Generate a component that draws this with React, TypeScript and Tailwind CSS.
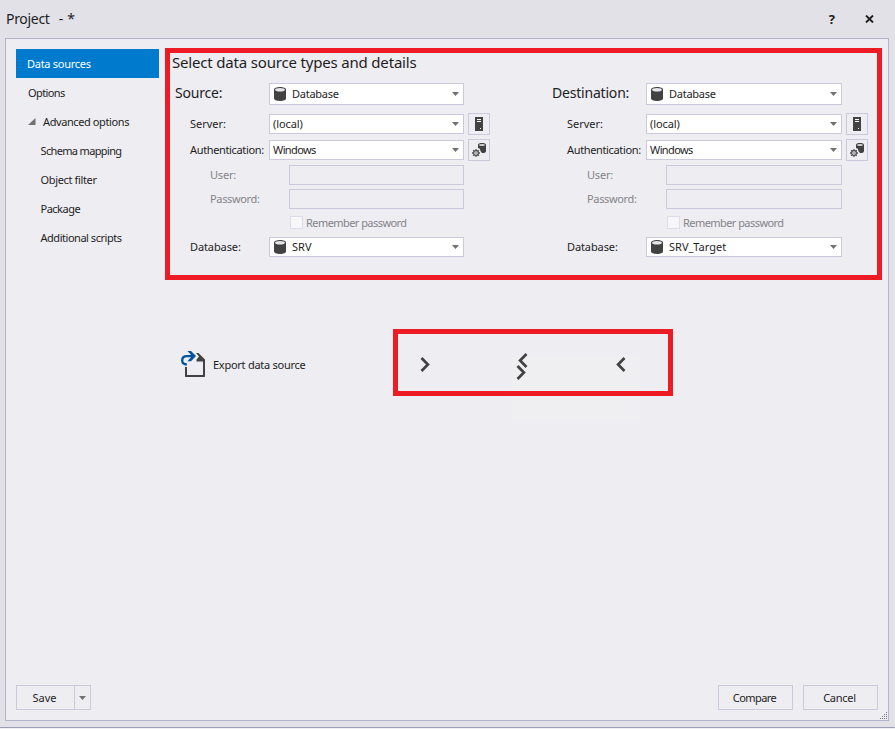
import type { ReactNode } from 'react';

function DatabaseIcon() {
  return (
    <svg width="12" height="14" viewBox="0 0 12 14" className="shrink-0">
      <path d="M0 2.5C0 1 2.5 0 6 0S12 1 12 2.5V11.5C12 13 9.5 14 6 14S0 13 0 11.5Z" fill="#424242" />
      <ellipse cx="6" cy="2.8" rx="4.9" ry="1.8" fill="#e6e5ea" />
    </svg>
  );
}

function Caret() {
  return (
    <svg width="7" height="4" viewBox="0 0 7 4" className="shrink-0">
      <path d="M0 0H7L3.5 4Z" fill="#717171" />
    </svg>
  );
}

function ServerIcon() {
  return (
    <svg width="8" height="14" viewBox="0 0 8 14">
      <path d="M0 0H8V14H0Z" fill="#424242" />
      <path d="M2 2H6V3H2ZM2 4H6V5H2ZM5 11H6V12H5Z" fill="#fff" />
    </svg>
  );
}

function GearDatabaseIcon() {
  return (
    <svg width="14" height="14" viewBox="0 0 14 14">
      <path d="M6 2C6 .6 7.6 0 10 0S14 .6 14 2V8.2C14 9.5 12.3 10 10 10L8.6 8.2 7.8 5.8 6 5Z" fill="#424242" />
      <ellipse cx="10" cy="1.9" rx="3" ry="1" fill="#d5d4da" />
      <path d="M4 6V14M0 10H8M1.2 7.2L6.8 12.8M6.8 7.2L1.2 12.8" stroke="#505050" strokeWidth="1.3" />
      <circle cx="4" cy="10" r="2.3" fill="#eeedf2" stroke="#505050" strokeWidth="1.2" />
      <circle cx="4" cy="10" r=".7" fill="#505050" />
    </svg>
  );
}

function ExportIcon() {
  return (
    <svg width="25" height="27" viewBox="0 0 25 27" className="shrink-0">
      <path d="M4 16H6V24H22V10H24V25.5L23.5 26H4.5L4 25.5Z" fill="#424242" />
      <path d="M15 2H17.5L24 8.5V10.5H15.5L15.5 8.5L18 5.5Z" fill="#424242" />
      <path d="M5.8 13.5C2.8 13.5 1.2 11.8 1.2 9.5C1.2 6.7 3.2 5.2 6 5.2H13" fill="none" stroke="#00539c" strokeWidth="2.3" />
      <path d="M6.5 0H10L15 5.1L10 10.2H6.5L11 5.1Z" fill="#00539c" />
    </svg>
  );
}

function Chevron({ left = false }: { left?: boolean }) {
  return (
    <svg width="10" height="15" viewBox="0 0 10 15" className="shrink-0">
      <path d={left ? 'M8.5 1L2.1 7.5L8.5 14' : 'M1.5 1L7.9 7.5L1.5 14'} fill="none" stroke="#424242" strokeWidth="2.7" />
    </svg>
  );
}

function Select({ children, icon = false, tall = false, tracking = '' }: { children: ReactNode; icon?: boolean; tall?: boolean; tracking?: string }) {
  return (
    <div className={`flex flex-1 items-center border border-[#cbcadc] bg-white pr-1 ${tall ? 'h-[22px]' : 'h-5'} ${icon ? 'gap-[6px] pl-1' : 'pl-[3px]'}`}>
      {icon && <DatabaseIcon />}
      <span className={`flex-1 ${tracking}`}>{children}</span>
      <Caret />
    </div>
  );
}

function IconButton({ children, label }: { children: ReactNode; label: string }) {
  return (
    <button aria-label={label} className="flex size-[22px] items-center justify-center border border-[#cbcadc]">
      {children}
    </button>
  );
}

function Field({ label, indent, children }: { label: string; indent: string; children: ReactNode }) {
  return (
    <div className="flex items-center">
      <div className={`w-[94px] shrink-0 ${indent}`}>{label}</div>
      {children}
    </div>
  );
}

function Connection({ title, database, width }: { title: string; database: string; width: string }) {
  return (
    <section className={width}>
      <div className="flex h-[22px] items-center">
        <h2 className="-mt-[2px] w-[94px] shrink-0 text-[14px] tracking-[-0.2px]">{title}</h2>
        <Select icon tall tracking="tracking-[-0.25px]">Database</Select>
      </div>
      <div className="mt-[9px]">
        <Field label="Server:" indent="pl-[15px]"><Select tracking="tracking-[-0.1px]">(local)</Select></Field>
      </div>
      <div className="mt-[6px]">
        <Field label="Authentication:" indent="pl-[15px] tracking-[-0.35px]"><Select tracking="tracking-[-0.6px]">Windows</Select></Field>
      </div>
      <div className="mt-[5px] text-[#858489]">
        <Field label="User:" indent="pl-[35px] tracking-[-0.2px]"><div className="ml-5 h-5 flex-1 border border-[#cbcadc]" /></Field>
      </div>
      <div className="mt-1 text-[#858489]">
        <Field label="Password:" indent="pl-[35px] tracking-[-0.35px]"><div className="ml-5 h-5 flex-1 border border-[#cbcadc]" /></Field>
      </div>
      <div className="mt-[7px] ml-[115px] flex h-[13px] items-center gap-[3px] tracking-[-0.56px] text-[#858489]">
        <span className="size-[13px] border border-[#dddce8] bg-[#f7f7fa]" />
        Remember password
      </div>
      <div className="mt-2">
        <Field label="Database:" indent="pl-[15px] tracking-[-0.1px]"><Select icon>{database}</Select></Field>
      </div>
    </section>
  );
}

function ButtonColumn() {
  return (
    <div className="mt-[30px] ml-1 flex flex-col gap-1">
      <IconButton label="Browse servers"><ServerIcon /></IconButton>
      <IconButton label="Connection settings"><GearDatabaseIcon /></IconButton>
    </div>
  );
}

const advancedItems = [
  { name: 'Schema mapping', tracking: 'tracking-[-0.65px]' },
  { name: 'Object filter', tracking: 'tracking-[-0.35px]' },
  { name: 'Package', tracking: 'tracking-[-0.5px]' },
  { name: 'Additional scripts', tracking: 'tracking-[-0.47px]' },
];

export default function App() {
  return (
    <div className="h-[729px] w-[895px] overflow-hidden bg-[#f0eff4] font-['Noto_Sans','Open_Sans',sans-serif] text-[11px] leading-[14px] whitespace-nowrap text-[#1e1e1e]">
      <div className="flex h-[728px] flex-col border-b border-[#9d9db5] bg-[#e2e1e8] pr-[6px] pb-[6px] pl-[5px]">
        <header className="flex h-[38px] shrink-0 items-center pl-[1px]">
          <span className="text-[14px] tracking-[-0.3px]">Project</span>
          <span className="ml-[9px] text-[14px] tracking-[0.3px]">- *</span>
          <span className="mr-[30px] ml-auto text-[13px] font-bold">?</span>
          <svg width="9" height="8" viewBox="0 0 9 8" className="mr-[15px]">
            <path d="M1 .5L8 7.5M8 .5L1 7.5" stroke="#1e1e1e" strokeWidth="1.9" />
          </svg>
        </header>
        <main className="relative flex flex-1 flex-col border border-[#b3b3cb] bg-[#eeedf2]">
          <div className="flex flex-1">
            <nav className="mt-[10px] ml-[10px] w-[143px] shrink-0">
              <div className="flex h-[29px] items-center bg-[#007acc] pl-[11px] tracking-[-0.27px] text-white">Data sources</div>
              <div className="flex h-[29px] items-center pl-[12px] tracking-[-0.6px]">Options</div>
              <div className="flex h-[29px] items-center gap-[7px] pl-3 tracking-[-0.4px]">
                <svg width="8" height="7" viewBox="0 0 8 7"><path d="M7.5 0V7H0Z" fill="#717171" /></svg>
                Advanced options
              </div>
              {advancedItems.map(({ name, tracking }) => (
                <div key={name} className={`flex h-[29px] items-center pl-[24.5px] ${tracking}`}>{name}</div>
              ))}
            </nav>
            <div className="mt-[9px] ml-[6px] w-[717px]">
              <div className="h-[232px] border-5 border-[#ed1c24]">
                <h1 className="mt-[1px] ml-[2px] text-[15px] leading-4 tracking-[-0.18px]">Select data source types and details</h1>
                <div className="mt-[13px] ml-[5px] flex">
                  <Connection title="Source:" database="SRV" width="w-[289px]" />
                  <ButtonColumn />
                  <div className="w-[62px]" />
                  <Connection title="Destination:" database="SRV_Target" width="w-[290px]" />
                  <ButtonColumn />
                </div>
              </div>
              <div className="mt-[49px] flex">
                <div className="flex h-[71px] w-[228px] items-center gap-[7px] pl-4">
                  <ExportIcon />
                  <span className="tracking-[-0.26px]">Export data source</span>
                </div>
                <div className="relative h-[67px] w-[280px] border-5 border-[#ed1c24]">
                  <div className="absolute top-[21px] left-[113px] h-[36px] w-[128px] bg-[#efeef1]" />
                  <div className="absolute top-[62px] left-[113px] h-[24px] w-[128px] bg-[#efeef1]" />
                  <div className="relative flex h-full items-center pl-[22px]">
                    <div className="mt-[3px]"><Chevron /></div>
                    <div className="mt-[7px] ml-[86px] flex flex-col">
                      <div className="ml-[2px]"><Chevron left /></div>
                      <div className="-mt-[3px]"><Chevron /></div>
                    </div>
                    <div className="mt-[4px] ml-[88px]"><Chevron left /></div>
                  </div>
                </div>
              </div>
            </div>
          </div>
          <footer className="flex h-[35px] items-start px-[10px]">
            <div className="flex h-[25px] w-[75px] border border-[#cbcadc]">
              <button className="w-[57px] pr-[2px]">Save</button>
              <button aria-label="Save options" className="flex flex-1 items-center justify-center border-l border-[#cbcadc]"><Caret /></button>
            </div>
            <button className="mr-[10px] ml-auto h-[25px] w-[75px] border border-[#cbcadc] pr-[2px] tracking-[-0.55px]">Compare</button>
            <button className="h-[25px] w-[75px] border border-[#cbcadc] pr-[2px] tracking-[-0.25px]">Cancel</button>
          </footer>
          <svg width="7" height="7" viewBox="0 0 7 7" className="absolute right-[1px] bottom-[1px]">
            <path d="M6 0h1v1H6zM4 2h1v1H4zM6 2h1v1H6zM2 4h1v1H2zM4 4h1v1H4zM6 4h1v1H6zM0 6h1v1H0zM2 6h1v1H2zM4 6h1v1H4zM6 6h1v1H6z" fill="#717171" />
          </svg>
        </main>
      </div>
    </div>
  );
}
